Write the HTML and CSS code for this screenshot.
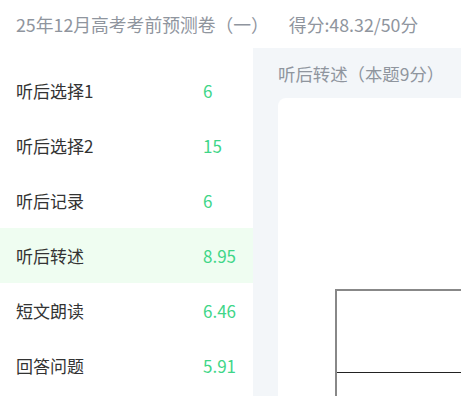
FILE: index.html
```html
<!DOCTYPE html>
<html lang="zh-CN">
<head>
<meta charset="UTF-8">
<meta name="viewport" content="width=device-width, initial-scale=1.0">
<title>25年12月高考考前预测卷（一）</title>
<link rel="stylesheet" href="styles.css">
</head>
<body>

<header class="topbar">
    <span class="paper-title">25年12月高考考前预测卷（一）</span>
    <span class="total-score">得分:48.32/50分</span>
</header>

<div class="layout">
    <!-- Sections list -->
    <ul class="sections">
        <li class="section-item"><span class="name">听后选择1</span><span class="score">6</span></li>
        <li class="section-item"><span class="name">听后选择2</span><span class="score">15</span></li>
        <li class="section-item"><span class="name">听后记录</span><span class="score">6</span></li>
        <li class="section-item active"><span class="name">听后转述</span><span class="score">8.95</span></li>
        <li class="section-item"><span class="name">短文朗读</span><span class="score">6.46</span></li>
        <li class="section-item"><span class="name">回答问题</span><span class="score">5.91</span></li>
    </ul>

    <!-- Detail panel -->
    <div class="detail">
        <div class="detail-title">听后转述（本题9分）</div>
        <div class="detail-card">
            <table class="answer-table">
                <tr><td class="cell-top"></td></tr>
                <tr><td class="cell-bottom"></td></tr>
            </table>
        </div>
    </div>
</div>

</body>
</html>
```

FILE: styles.css
```css
* { box-sizing: border-box; }
body {
    margin: 0;
    font-family: "Noto Sans CJK SC", "Noto Sans", sans-serif;
    background: #fff;
    color: #333;
    overflow: hidden;
}
.topbar {
    height: 48px;
    display: flex;
    align-items: center;
    padding-left: 16px;
    font-size: 17.8px;
    color: #8f959e;
}
.total-score { margin-left: 20px; }
.layout {
    display: flex;
    height: 348px;
}
.sections {
    flex-shrink: 0;
    list-style: none;
    margin: 0;
    padding: 15px 0 0;
    width: 253px;
}
.section-item {
    display: flex;
    align-items: center;
    height: 55px;
    padding-left: 16px;
    font-size: 17px;
}
.section-item.active { background: #effdf1; }
.section-item .name { width: 187px; color: #333; }
.section-item .score { color: #3fd688; }
.detail {
    flex: 1;
    min-width: 0;
    overflow: hidden;
    background: #f3f6f9;
    padding: 13px 0 0 25px;
}
.detail-title {
    font-size: 17.4px;
    color: #8f959e;
    height: 37px;
    white-space: nowrap;
}
.detail-card {
    background: #fff;
    border-radius: 8px 0 0 0;
    height: 300px;
    padding: 191px 0 0 57px;
}
.answer-table {
    border-collapse: collapse;
    width: 200px;
    border-top: 2px solid #888;
    border-left: 2px solid #888;
}
.answer-table td { padding: 0; }
.cell-top { height: 82px; border-bottom: 1px solid #222; }
.cell-bottom { height: 40px; }
```
